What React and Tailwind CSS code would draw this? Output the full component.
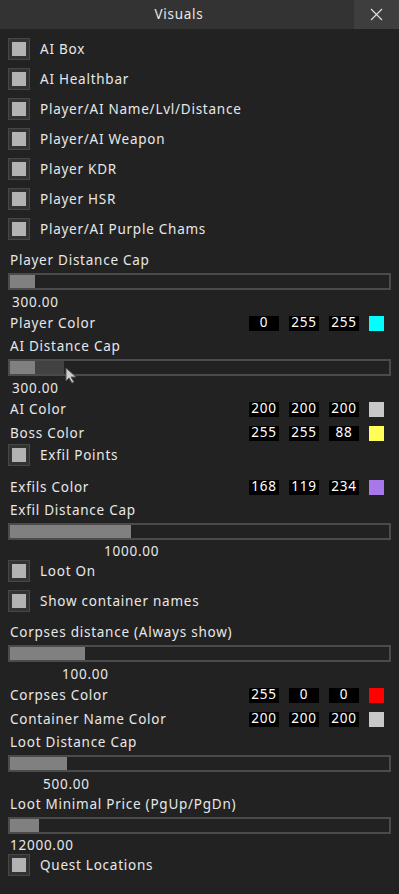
import React from "react";

const font = { fontFamily: '"Noto Sans", "Open Sans", sans-serif' };

function Check({ label, cls = "mt-[8px]" }) {
  return (
    <div className={`flex items-center h-[22px] ${cls}`}>
      <div className="ml-[8px] w-[22px] h-[22px] bg-[#333333] border border-[#474747] flex items-center justify-center">
        <div className="w-[14px] h-[14px] bg-[#b3b3b3]" />
      </div>
      <span className="ml-[10px]">{label}</span>
    </div>
  );
}

function Label({ text, cls = "mt-[3px]", ml = "ml-[10px]", h = "h-[20px]" }) {
  return (
    <div className={`flex items-center ${h} ${cls}`}>
      <span className={ml}>{text}</span>
    </div>
  );
}

function Slider({ fill, children }) {
  return (
    <div className="relative mt-[3px] mx-[8px] h-[17px] border-2 border-[#4b4b4b] bg-[#222222] flex">
      <div className="h-full bg-[#808080]" style={{ width: fill }} />
      {children}
    </div>
  );
}

function ColorRow({ label, vals, color, cls = "mt-[1px]" }) {
  return (
    <div className={`flex items-center h-[20px] ${cls}`}>
      <span className="ml-[10px] flex-1">{label}</span>
      <div className="flex items-center gap-[10px] mr-[15px]">
        {vals.map((v, i) => (
          <div key={i} className="w-[30px] h-[15px] bg-black flex items-center justify-center text-white leading-none">
            {v}
          </div>
        ))}
        <div className="w-[15px] h-[15px]" style={{ background: color }} />
      </div>
    </div>
  );
}

export default function App() {
  return (
    <div
      className="w-[399px] h-[894px] bg-[#222222] text-[#e8e8e8] text-[13.5px] tracking-[0.75px] overflow-hidden"
      style={font}
    >
      <div className="h-[29px] bg-[#333333] flex items-center relative">
        <div className="flex-1 text-center pl-[4px]">Visuals</div>
        <div className="w-[45px] h-full bg-[#3e3e3e] flex items-center justify-center">
          <svg width="13" height="13" viewBox="0 0 13 13">
            <path d="M1 1 L12 12 M12 1 L1 12" stroke="#dcdcdc" strokeWidth="1.2" />
          </svg>
        </div>
      </div>
      <div className="flex flex-col pt-[9px]">
        <Check label="AI Box" cls="" />
        <Check label="AI Healthbar" />
        <Check label="Player/AI Name/Lvl/Distance" />
        <Check label="Player/AI Weapon" />
        <Check label="Player KDR" />
        <Check label="Player HSR" />
        <Check label="Player/AI Purple Chams" />

        <Label text="Player Distance Cap" cls="mt-[10px]" />
        <Slider fill={25} />
        <Label text="300.00" cls="mt-[2px]" ml="ml-[12px]" />
        <ColorRow label="Player Color" vals={["0", "255", "255"]} color="#00ffff" />

        <Label text="AI Distance Cap" />
        <Slider fill={25}>
          <div className="h-full w-[29px] bg-[#424242]" />
          <svg className="absolute left-[54px] top-[6px]" width="16" height="18" viewBox="0 0 16 18">
            <path d="M2 1 L2 14 L5 11 L8 16 L10 15 L7 10 L12 10 Z" fill="#cfcfcf" stroke="#555" strokeWidth="1" strokeLinejoin="round" />
          </svg>
        </Slider>
        <Label text="300.00" cls="mt-[2px]" ml="ml-[12px]" />
        <ColorRow label="AI Color" vals={["200", "200", "200"]} color="#c8c8c8" />
        <ColorRow label="Boss Color" vals={["255", "255", "88"]} color="#ffff58" cls="mt-[4px]" />
        <Check label="Exfil Points" cls="mt-[1px]" />
        <ColorRow label="Exfils Color" vals={["168", "119", "234"]} color="#a877ea" cls="mt-[11px]" />

        <Label text="Exfil Distance Cap" />
        <Slider fill={121} />
        <Label text="1000.00" cls="mt-[2px]" ml="ml-[104px]" h="h-[18px]" />
        <Check label="Loot On" cls="" />
        <Check label="Show container names" />

        <Label text="Corpses distance (Always show)" cls="mt-[10px]" />
        <Slider fill={75} />
        <Label text="100.00" cls="mt-[2px]" ml="ml-[62px]" />
        <ColorRow label="Corpses Color" vals={["255", "0", "0"]} color="#ff0000" />
        <ColorRow label="Container Name Color" vals={["200", "200", "200"]} color="#c8c8c8" cls="mt-[4px]" />

        <Label text="Loot Distance Cap" />
        <Slider fill={57} />
        <Label text="500.00" cls="mt-[2px]" ml="ml-[43px]" />
        <Label text="Loot Minimal Price (PgUp/PgDn)" cls="" />
        <Slider fill={29} />
        <Label text="12000.00" cls="mt-[2px]" ml="ml-[10px]" h="h-[18px]" />
        <Check label="Quest Locations" cls="" />
      </div>
    </div>
  );
}
